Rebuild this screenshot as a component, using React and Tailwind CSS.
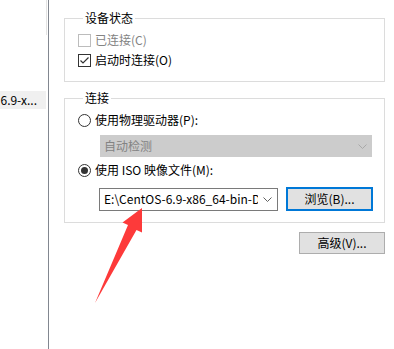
import React from "react";

const Chevron = ({ color = "#606060" }) => (
  <svg width="9" height="5" viewBox="0 0 9 5" className="shrink-0">
    <polyline points="0.5,0.5 4.5,4.5 8.5,0.5" fill="none" stroke={color} strokeWidth="1" />
  </svg>
);

const CheckBox = ({ checked, disabled }) => (
  <div
    className={`w-[13px] h-[13px] border bg-white flex items-center justify-center shrink-0 ${
      disabled ? "border-[#bcbcbc]" : "border-[#333333]"
    }`}
  >
    {checked && (
      <svg width="11" height="11" viewBox="0 0 11 11">
        <polyline points="1.5,5.5 4,8 9.5,2.5" fill="none" stroke="#333" strokeWidth="1.2" />
      </svg>
    )}
  </div>
);

const Radio = ({ checked }) => (
  <div className="w-[13px] h-[13px] rounded-full border border-[#333333] bg-white flex items-center justify-center shrink-0">
    {checked && <div className="w-[7px] h-[7px] rounded-full bg-[#333333]" />}
  </div>
);

export default function App() {
  return (
    <div className="relative w-[394px] h-[349px] bg-white flex overflow-hidden font-['Noto_Sans_CJK_SC',sans-serif] text-[12px] text-black leading-4">
      {/* left list panel */}
      <div className="w-[49px] h-full border-r border-[#828790] flex flex-col shrink-0">
        <div className="flex justify-end">
          <div className="w-px h-[35px] bg-[#e3e3e3] mr-px" />
        </div>
        <div className="mt-[56px] h-[18px] bg-[#f0f0f0] mr-[2px] flex items-center justify-end pr-[9px] overflow-hidden whitespace-nowrap">
          6.9-x...
        </div>
      </div>

      {/* right content */}
      <div className="flex flex-col ml-[15px] pt-[10px] w-[321px]">
        <fieldset className="border border-[#dcdcdc] pl-[13px] pr-0 pt-[4px] pb-[11px] m-0 min-w-0">
          <legend className="ml-[5px] px-[2px] leading-4">设备状态</legend>
          <div className="h-[20px] flex items-center gap-[4px] text-[#838383]">
            <CheckBox disabled />
            <span>已连接(C)</span>
          </div>
          <div className="h-[20px] flex items-center gap-[4px]">
            <CheckBox checked />
            <span>启动时连接(O)</span>
          </div>
        </fieldset>

        <fieldset className="mt-[8px] border border-[#dcdcdc] pl-[13px] pr-0 pt-[4px] pb-[11px] m-0 min-w-0">
          <legend className="ml-[5px] px-[2px] leading-4">连接</legend>
          <div className="h-[20px] flex items-center gap-[4px]">
            <Radio />
            <span>使用物理驱动器(P):</span>
          </div>
          <div className="mt-[5px] ml-[22px] w-[272px] h-[22px] bg-[#cccccc] border border-[#cccccc] flex items-center justify-between pl-[3px] pr-[4px] text-[#838383]">
            <span>自动检测</span>
            <Chevron color="#a8a8a8" />
          </div>
          <div className="mt-[3px] h-[20px] flex items-center gap-[4px]">
            <Radio checked />
            <span>使用 ISO 映像文件(M):</span>
          </div>
          <div className="mt-[7px] ml-[21px] h-[24px] flex items-center gap-[8px]">
            <div className="w-[179px] h-[23px] bg-white border border-[#7a7a7a] flex items-center pl-[4px] pr-[5px] gap-[5px]">
              <span className="flex-1 overflow-hidden whitespace-nowrap">E:\CentOS-6.9-x86_64-bin-DVD1.iso</span>
              <Chevron />
            </div>
            <div className="w-[87px] h-[24px] bg-[#e1e1e1] border-2 border-[#0078d7] flex items-center justify-center">
              浏览(B)...
            </div>
          </div>
        </fieldset>

        <div className="mt-[9px] flex justify-end">
          <div className="w-[86px] h-[22px] bg-[#e1e1e1] border border-[#adadad] flex items-center justify-center">
            高级(V)...
          </div>
        </div>
      </div>

      {/* red annotation arrow */}
      <svg
        className="absolute left-0 top-0 pointer-events-none"
        width="394"
        height="349"
        viewBox="0 0 394 349"
      >
        <polygon
          points="95,303 128,225 122.5,222.5 142,208 142,232.5 136.5,230"
          fill="#fd3a3a"
        />
      </svg>
    </div>
  );
}
